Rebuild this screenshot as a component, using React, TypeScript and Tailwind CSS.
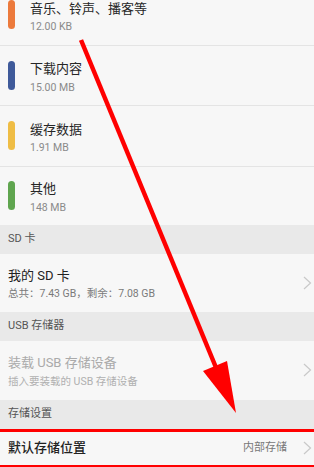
const font = { fontFamily: 'Roboto, "Noto Sans CJK SC", sans-serif' };

type Usage = { title: string; size: string; color: string };

const usages: Usage[] = [
  { title: "音乐、铃声、播客等", size: "12.00 KB", color: "bg-[#ec7a3c]" },
  { title: "下载内容", size: "15.00 MB", color: "bg-[#3f5a9a]" },
  { title: "缓存数据", size: "1.91 MB", color: "bg-[#efbd45]" },
  { title: "其他", size: "148 MB", color: "bg-[#5fa54f]" },
];

function Chevron() {
  return (
    <svg width="9" height="14" viewBox="0 0 9 14" className="shrink-0">
      <path d="M1 1 L7.5 7 L1 13" fill="none" stroke="#c9c9c9" strokeWidth="1.2" />
    </svg>
  );
}

function UsageText({ item }: { item: Usage }) {
  return (
    <div className="ml-[15px] mt-[3px] flex flex-col">
      <span className="text-[13px] leading-[17px] text-[#262626]">{item.title}</span>
      <span className="mt-[3.5px] text-[10.5px] leading-[13px] text-[#8a8a8a]">{item.size}</span>
    </div>
  );
}

function UsageRow({ item, first, last }: { item: Usage; first?: boolean; last?: boolean }) {
  return (
    <div
      className={`flex items-center pl-2 ${first ? "-mt-[15px]" : ""} ${
        last ? "h-[58px]" : "h-[60.5px] border-b border-[#e4e4e4]"
      }`}
    >
      <div className={`h-[29px] w-[7px] rounded-full ${item.color}`} />
      <UsageText item={item} />
    </div>
  );
}

function Header({ label }: { label: string }) {
  return (
    <div className="flex h-[29px] items-center bg-[#e9e9e9] pl-2 text-[11px] text-[#555]">
      {label}
    </div>
  );
}

export default function App() {
  return (
    <div className="relative h-[467px] w-[314px] overflow-hidden bg-[#f7f7f7]" style={font}>
      <UsageRow item={usages[0]} first />
      <UsageRow item={usages[1]} />
      <UsageRow item={usages[2]} />
      <UsageRow item={usages[3]} last />

      <Header label="SD 卡" />
      <div className="flex h-[58px] items-center justify-between pl-2 pr-[2px]">
        <div className="mt-[2px] flex flex-col">
          <span className="text-[13px] leading-[17px] text-[#222]">我的 SD 卡</span>
          <span className="mt-[3.5px] text-[10.5px] leading-[13px] text-[#7a7a7a]">
            总共：7.43 GB，剩余：7.08 GB
          </span>
        </div>
        <Chevron />
      </div>

      <Header label="USB 存储器" />
      <div className="flex h-[59px] items-center justify-between pl-2 pr-[2px]">
        <div className="mt-[2px] flex flex-col">
          <span className="text-[13px] leading-[17px] text-[#aaa]">装载 USB 存储设备</span>
          <span className="mt-[3.5px] text-[10.5px] leading-[13px] text-[#b0b0b0]">
            插入要装载的 USB 存储设备
          </span>
        </div>
        <Chevron />
      </div>

      <Header label="存储设置" />
      <div className="flex h-[39px] items-center justify-between border-y-[3px] border-[#ff0000] pl-2 pr-[2px]">
        <span className="text-[13px] font-medium text-[#222]">默认存储位置</span>
        <div className="flex items-center gap-[16px]">
          <span className="text-[11px] text-[#777]">内部存储</span>
          <Chevron />
        </div>
      </div>

      <svg
        className="pointer-events-none absolute left-0 top-0"
        width="314"
        height="467"
        viewBox="0 0 314 467"
      >
        <line x1="81" y1="40" x2="217" y2="370" stroke="#ff0000" strokeWidth="4.5" />
        <polygon points="203,371 227,361 236,413" fill="#ff0000" />
      </svg>
    </div>
  );
}
